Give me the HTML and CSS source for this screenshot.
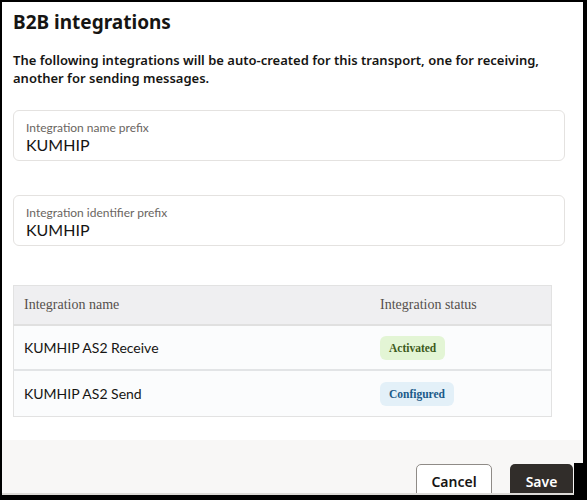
FILE: index.html
```html
<!DOCTYPE html>
<html lang="en">
<head>
    <meta charset="UTF-8">
    <meta name="viewport" content="width=device-width, initial-scale=1.0">
    <title>B2B integrations</title>
    <link rel="stylesheet" href="styles.css">
</head>
<body>

    <div class="dialog">
        <div class="content">
            <h1>B2B integrations</h1>
            <p class="intro">The following integrations will be auto-created for this transport, one for receiving, another for sending messages.</p>

            <!-- Prefix fields -->
            <div class="field">
                <label class="field-label">Integration name prefix</label>
                <div class="field-value">KUMHIP</div>
            </div>

            <div class="field">
                <label class="field-label">Integration identifier prefix</label>
                <div class="field-value">KUMHIP</div>
            </div>

            <!-- Integrations to be created -->
            <table class="grid">
                <thead>
                    <tr>
                        <th class="col-name">Integration name</th>
                        <th class="col-status">Integration status</th>
                    </tr>
                </thead>
                <tbody>
                    <tr>
                        <td class="col-name">KUMHIP AS2 Receive</td>
                        <td class="col-status"><span class="badge badge-active">Activated</span></td>
                    </tr>
                    <tr>
                        <td class="col-name">KUMHIP AS2 Send</td>
                        <td class="col-status"><span class="badge badge-configured">Configured</span></td>
                    </tr>
                </tbody>
            </table>
        </div>

        <div class="footer">
            <button class="button button-outline">Cancel</button>
            <button class="button button-primary">Save</button>
        </div>
    </div>
    <div class="corner"></div>

</body>
</html>
```

FILE: styles.css
```css
html, body {
    height: 100%;
}
body {
    margin: 0;
    padding: 2px 4px 5px 2px;
    box-sizing: border-box;
    background-color: #000;
    font-family: "Noto Sans", Arial, sans-serif;
    color: #161513;
    position: relative;
}
.dialog {
    height: 100%;
    background-color: #fff;
    border-bottom: 2px solid #dcdad7;
    box-sizing: border-box;
    overflow: hidden;
    display: flex;
    flex-direction: column;
}
.content {
    padding: 0 18px 0 11px;
    flex: 1;
}
h1 {
    margin: 7px 0 0 0;
    font-size: 19px;
    font-weight: 700;
    line-height: 26px;
}
.intro {
    margin: 16px 0 0 0;
    font-size: 13px;
    font-weight: 600;
    line-height: 18px;
}
.field {
    margin-top: 23px;
    height: 51px;
    box-sizing: border-box;
    border: 1px solid #e4e2e0;
    border-radius: 6px;
    padding: 9px 12px 0 12px;
    font-family: Lato, "Noto Sans", sans-serif;
}
.field + .field {
    margin-top: 34px;
}
.field-label {
    display: block;
    font-size: 12px;
    color: #6a6561;
    line-height: 15px;
}
.field-value {
    font-size: 16px;
    color: #161513;
    line-height: 19px;
}
.grid {
    margin-top: 39px;
    width: 539px;
    border-collapse: collapse;
    border: 1px solid #e2e2e2;
}
.grid th {
    height: 38px;
    padding: 0 10px;
    text-align: left;
    font-family: "Liberation Serif", "Times New Roman", serif;
    font-weight: 400;
    font-size: 14px;
    color: #55504c;
    background-color: #efeff1;
    border-bottom: 2px solid #e0e0e0;
}
.grid td {
    height: 43px;
    padding: 0 10px;
    font-family: Lato, "Noto Sans", sans-serif;
    font-size: 14px;
    color: #161513;
    background-color: #fbfcfd;
    border-bottom: 2px solid #e2e4e6;
}
.grid tr:last-child td {
    height: 45px;
    border-bottom: 1px solid #e2e2e2;
}
.grid .col-status {
    width: 161px;
}
.badge {
    display: inline-block;
    padding: 0 9px;
    height: 24px;
    line-height: 24px;
    border-radius: 6px;
    font-family: "Liberation Serif", "Times New Roman", serif;
    font-weight: 700;
    font-size: 11.5px;
}
.badge-active {
    background-color: #e3f5d5;
    color: #3d5b1c;
}
.badge-configured {
    background-color: #e3f0f8;
    color: #1b5a89;
}
.footer {
    flex: none;
    height: 53px;
    box-sizing: border-box;
    background-color: #f8f7f6;
    display: flex;
    justify-content: flex-end;
    align-items: flex-start;
    gap: 18px;
    padding: 24px 10px 0 0;
}
.button {
    flex: none;
    height: 40px;
    border-radius: 5px;
    font-family: "Noto Sans", Arial, sans-serif;
    font-size: 14px;
    font-weight: 600;
    padding: 0 0 6px 0;
    cursor: pointer;
}
.button-outline {
    width: 76px;
    background-color: #fff;
    border: 1px solid #8f8b87;
    color: #161513;
}
.button-primary {
    width: 63px;
    background-color: #312d2a;
    border: none;
    color: #fff;
}
.corner {
    position: absolute;
    right: 0;
    bottom: 0;
    width: 13px;
    height: 37px;
    background-color: #000;
}
```
